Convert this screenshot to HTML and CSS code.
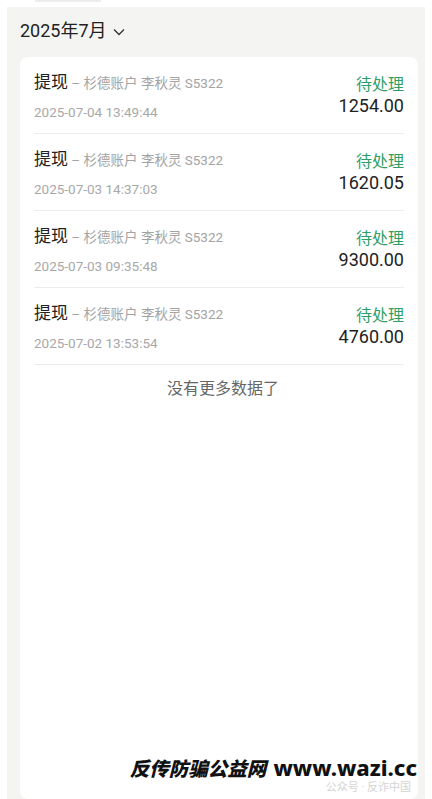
FILE: index.html
```html
<!DOCTYPE html>
<html lang="zh-CN">
<head>
<meta charset="utf-8">
<title>提现记录</title>
<link rel="stylesheet" href="styles.css">
</head>
<body>
<div class="topbar"><div class="tab"></div></div>
<div class="page">
  <div class="month">2025年7月 <svg class="chev" width="12" height="8" viewBox="0 0 12 8"><path d="M1 1.5 L6 6.5 L11 1.5" fill="none" stroke="#333" stroke-width="1.3"/></svg></div>
  <div class="card">
    <div class="row">
      <div class="left">
        <div class="title"><span class="kind">提现</span><span class="sub"> – 杉德账户 李秋灵 S5322</span></div>
        <div class="date">2025-07-04 13:49:44</div>
      </div>
      <div class="right">
        <div class="status">待处理</div>
        <div class="amount">1254.00</div>
      </div>
    </div>
    <div class="row">
      <div class="left">
        <div class="title"><span class="kind">提现</span><span class="sub"> – 杉德账户 李秋灵 S5322</span></div>
        <div class="date">2025-07-03 14:37:03</div>
      </div>
      <div class="right">
        <div class="status">待处理</div>
        <div class="amount">1620.05</div>
      </div>
    </div>
    <div class="row">
      <div class="left">
        <div class="title"><span class="kind">提现</span><span class="sub"> – 杉德账户 李秋灵 S5322</span></div>
        <div class="date">2025-07-03 09:35:48</div>
      </div>
      <div class="right">
        <div class="status">待处理</div>
        <div class="amount">9300.00</div>
      </div>
    </div>
    <div class="row">
      <div class="left">
        <div class="title"><span class="kind">提现</span><span class="sub"> – 杉德账户 李秋灵 S5322</span></div>
        <div class="date">2025-07-02 13:53:54</div>
      </div>
      <div class="right">
        <div class="status">待处理</div>
        <div class="amount">4760.00</div>
      </div>
    </div>
    <div class="nomore">没有更多数据了</div>
  </div>
</div>
<div class="watermark">
  <div class="wm-main"><span class="wm-cn">反传防骗公益网</span><span class="wm-url">www.wazi.cc</span></div>
  <div class="wm-sub">公众号 · 反诈中国</div>
</div>
</body>
</html>
```
FILE: styles.css
```css
* { box-sizing: border-box; }
html, body {
  margin: 0;
  padding: 0;
  background: #ffffff;
  font-family: Roboto, "Noto Sans CJK SC", sans-serif;
  color: #222;
  overflow: hidden;
}
body { height: 799px; position: relative; }
.topbar {
  height: 7px;
  padding-left: 35px;
}
.tab {
  width: 66px;
  height: 2px;
  background: #eceeec;
}
.page {
  margin: 0 7px;
  height: 792px;
  background: #f4f5f3;
  padding: 0 7px 0 13px;
  display: flex;
  flex-direction: column;
}
.month {
  height: 50px;
  padding-top: 13px;
  padding-bottom: 15px;
  font-size: 18px;
  line-height: 22px;
  color: #222;
  display: flex;
  align-items: center;
  align-self: flex-start;
  gap: 6px;
}
.chev { margin-top: 1px; }
.card {
  flex: 1;
  background: #fff;
  border-radius: 8px;
  padding: 0 14px;
}
.row {
  display: flex;
  justify-content: space-between;
  padding: 14px 0 13px;
  border-bottom: 1px solid #ececec;
  height: 77px;
}
.title {
  line-height: 22px;
  white-space: nowrap;
}
.kind {
  font-size: 17px;
  color: #222;
}
.sub {
  font-size: 13.5px;
  color: #a3a3a3;
}
.date {
  margin-top: 9px;
  font-size: 13.5px;
  line-height: 18px;
  color: #a8a8a8;
}
.right {
  padding-top: 4px;
  text-align: right;
}
.status {
  font-size: 16px;
  line-height: 20px;
  color: #2f9e64;
}
.amount {
  font-size: 18px;
  line-height: 22px;
  color: #222;
}
.nomore {
  padding-top: 14px;
  padding-left: 8px;
  text-align: center;
  font-size: 16px;
  line-height: 20px;
  color: #666;
}
.watermark {
  position: absolute;
  right: 15px;
  bottom: 5px;
  text-align: right;
}
.wm-main {
  line-height: 22px;
  color: #111;
  white-space: nowrap;
}
.wm-cn {
  font-family: "Noto Sans CJK SC", sans-serif;
  font-weight: 900;
  font-style: italic;
  font-size: 19.5px;
}
.wm-url {
  margin-left: 7px;
  font-family: "Noto Sans", sans-serif;
  font-weight: 800;
  font-size: 22px;
}
.wm-sub {
  font-size: 11px;
  line-height: 12px;
  color: #d4d4d4;
  padding-right: 6px;
}
```
